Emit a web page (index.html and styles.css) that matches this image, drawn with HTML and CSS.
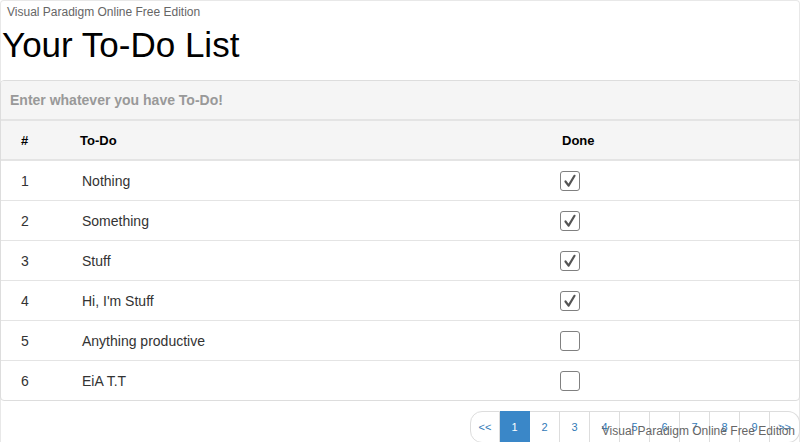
FILE: index.html
```html
<!DOCTYPE html>
<html>
<head>
<meta charset="utf-8">
<link rel="stylesheet" href="styles.css">
</head>
<body>
<div class="page">
  <div class="wm-top">Visual Paradigm Online Free Edition</div>
  <h1 class="title">Your To-Do List</h1>
  <div class="panel">
    <div class="panel-heading">Enter whatever you have To-Do!</div>
    <div class="todo">
      <div class="row head"><span class="c-num">#</span><span class="c-text">To-Do</span><span class="c-done">Done</span></div>
      <div class="row"><span class="c-num">1</span><span class="c-text">Nothing</span><span class="c-done"><span class="box"><svg viewBox="0 0 20 20" width="20" height="20"><path d="M5.5 10.5 L8.6 14.6 L14.5 4.8" fill="none" stroke="#555" stroke-width="2.2" stroke-linecap="round" stroke-linejoin="round"/></svg></span></span></div>
      <div class="row"><span class="c-num">2</span><span class="c-text">Something</span><span class="c-done"><span class="box"><svg viewBox="0 0 20 20" width="20" height="20"><path d="M5.5 10.5 L8.6 14.6 L14.5 4.8" fill="none" stroke="#555" stroke-width="2.2" stroke-linecap="round" stroke-linejoin="round"/></svg></span></span></div>
      <div class="row"><span class="c-num">3</span><span class="c-text">Stuff</span><span class="c-done"><span class="box"><svg viewBox="0 0 20 20" width="20" height="20"><path d="M5.5 10.5 L8.6 14.6 L14.5 4.8" fill="none" stroke="#555" stroke-width="2.2" stroke-linecap="round" stroke-linejoin="round"/></svg></span></span></div>
      <div class="row"><span class="c-num">4</span><span class="c-text">Hi, I'm Stuff</span><span class="c-done"><span class="box"><svg viewBox="0 0 20 20" width="20" height="20"><path d="M5.5 10.5 L8.6 14.6 L14.5 4.8" fill="none" stroke="#555" stroke-width="2.2" stroke-linecap="round" stroke-linejoin="round"/></svg></span></span></div>
      <div class="row"><span class="c-num">5</span><span class="c-text">Anything productive</span><span class="c-done"><span class="box"></span></span></div>
      <div class="row"><span class="c-num">6</span><span class="c-text">EiA T.T</span><span class="c-done"><span class="box"></span></span></div>
    </div>
  </div>
  <div class="pager-row">
    <ul class="pagination">
      <li>&lt;&lt;</li>
      <li class="active">1</li>
      <li>2</li>
      <li>3</li>
      <li>4</li>
      <li>5</li>
      <li>6</li>
      <li>7</li>
      <li>8</li>
      <li>9</li>
      <li>&gt;&gt;</li>
    </ul>
  </div>
  <div class="wm-bottom">Visual Paradigm Online Free Edition</div>
</div>
</body>
</html>
```

FILE: styles.css
```css
html, body {
  margin: 0;
  padding: 0;
  background: #fff;
}
body {
  font-family: "Liberation Sans", Arial, sans-serif;
  color: #333;
  width: 800px;
  height: 442px;
  overflow: hidden;
}
.page {
  position: relative;
  height: 442px;
  box-sizing: border-box;
  border: 1px solid #e8e8e8;
  border-bottom: none;
  border-radius: 4px 4px 0 0;
}
.wm-top {
  font-size: 12px;
  color: #666;
  padding: 4px 0 0 6px;
  line-height: 15px;
}
.title {
  margin: 0;
  font-weight: normal;
  font-size: 35px;
  line-height: 50px;
  color: #000;
  padding-left: 1px;
  height: 60px;
}
.panel {
  margin: 0 -1px;
  border: 1px solid #ddd;
  border-radius: 4px;
  overflow: hidden;
}
.panel-heading {
  background: #f5f5f5;
  border-bottom: 2px solid #e4e4e4;
  height: 38px;
  line-height: 38px;
  padding-left: 9px;
  font-size: 14px;
  font-weight: bold;
  color: #999;
}
.todo {
  font-size: 14px;
}
.row {
  display: flex;
  align-items: center;
  height: 40px;
  box-sizing: border-box;
  border-top: 1px solid #e4e4e4;
}
.row.head {
  background: #f5f5f5;
  height: 39px;
  border-top: none;
  border-bottom: 1px solid #e4e4e4;
  font-size: 13px;
  font-weight: bold;
  color: #000;
}
.c-num {
  width: 79px;
  padding-left: 20px;
  box-sizing: border-box;
  flex: none;
}
.c-text {
  width: 480px;
  padding-left: 2px;
  box-sizing: border-box;
  flex: none;
}
.head .c-text {
  padding-left: 0;
}
.c-done {
  padding-left: 0;
}
.head .c-done {
  padding-left: 2px;
}
.box {
  display: block;
  width: 18px;
  height: 18px;
  border: 1.5px solid #808080;
  border-radius: 3px;
  position: relative;
}
.box svg {
  position: absolute;
  left: -1px;
  top: -0.5px;
}
.pager-row {
  display: flex;
  justify-content: flex-end;
  padding-top: 10px;
  margin-right: -1px;
}
.pagination {
  display: flex;
  list-style: none;
  margin: 0;
  padding: 0;
}
.pagination li {
  width: 29px;
  height: 30px;
  line-height: 30px;
  text-align: center;
  font-size: 11px;
  color: #337ab7;
  border: 1px solid #ddd;
  border-left: none;
  background: #fff;
}
.pagination li:first-child {
  width: 28px;
  border-left: 1px solid #ddd;
  border-radius: 12px 0 0 12px;
}
.pagination li:last-child {
  border-radius: 0 12px 12px 0;
}
.pagination li.active {
  background: #3a87c8;
  color: #fff;
  border-color: #3a87c8;
}
.wm-bottom {
  position: absolute;
  right: 4px;
  bottom: 4px;
  font-size: 12px;
  color: #666;
}
```
